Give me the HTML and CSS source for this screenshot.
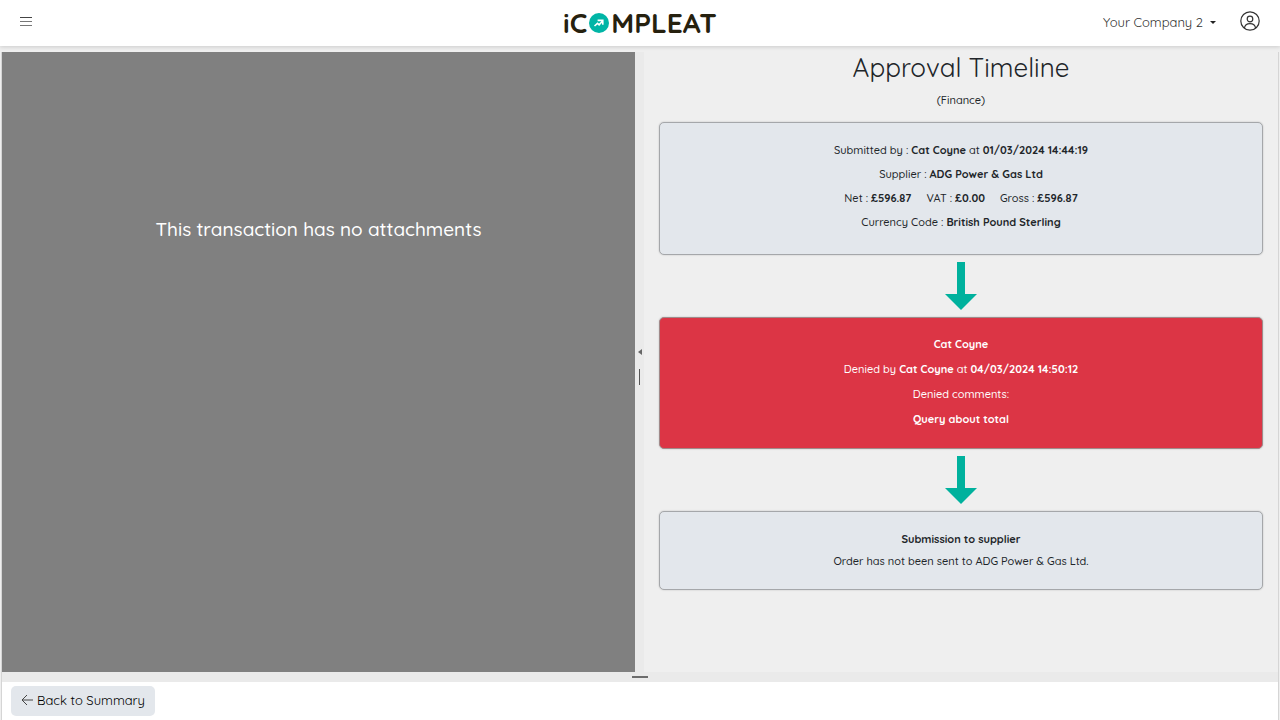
FILE: index.html
```html
<!DOCTYPE html>
<html lang="en">
<head>
    <meta charset="UTF-8">
    <meta name="viewport" content="width=device-width, initial-scale=1.0">
    <title>Approval Timeline</title>
    <link rel="stylesheet" href="styles.css">
</head>
<body>
    <header class="topbar">
        <button class="icon-btn menu-btn" type="button" aria-label="Menu">
            <svg width="12" height="11" viewBox="0 0 12 11" stroke="#777">
                <path d="M0 1.5h12" stroke="#444" />
                <path d="M0 5.5h12M0 9.5h12" />
            </svg>
        </button>
        <a class="logo" href="#" aria-label="iCompleat">
            <span>iC</span>
            <svg width="20" height="20" viewBox="0 0 20 20" fill="none">
                <circle cx="10" cy="10" r="10" fill="#00b5a6" />
                <path d="M5.5 13l3-2.6 1.6 1.4L13.6 8M8.6 7.4h5.2v4.4" stroke="#fff" stroke-width="1.6" />
            </svg>
            <span>MPLEAT</span>
        </a>
        <div class="account">
            <button class="company-btn" type="button">Your Company 2 <span class="caret"></span></button>
            <button class="icon-btn" type="button" aria-label="Profile">
                <svg width="20" height="20" viewBox="0 0 20 20" fill="none" stroke="#333" stroke-width="1.2">
                    <circle cx="10" cy="10" r="9.2" />
                    <circle cx="10" cy="8" r="2.8" />
                    <path d="M4.4 17.2c.4-3 2.6-4.6 5.6-4.6s5.2 1.6 5.6 4.6" />
                </svg>
            </button>
        </div>
    </header>

    <main class="splitter">
        <div class="panes">
            <section class="attachments">
                <p>This transaction has no attachments</p>
            </section>
            <div class="split-bar">
                <span class="collapse"></span>
                <span class="handle"></span>
            </div>
            <section class="timeline">
                <h1>Approval Timeline</h1>
                <p class="dept">(Finance)</p>

                <div class="card submitted">
                    <p>Submitted by : <b>Cat Coyne</b> at <b>01/03/2024 14:44:19</b></p>
                    <p>Supplier : <b>ADG Power &amp; Gas Ltd</b></p>
                    <p class="totals">
                        <span>Net : <b>£596.87</b></span>
                        <span>VAT : <b>£0.00</b></span>
                        <span>Gross : <b>£596.87</b></span>
                    </p>
                    <p>Currency Code : <b>British Pound Sterling</b></p>
                </div>

                <svg class="arrow" width="32" height="48" viewBox="0 0 32 48"><path d="M12 0h8v32h12L16 48 0 32h12z" fill="#00b19d" /></svg>

                <div class="card denied">
                    <p><b>Cat Coyne</b></p>
                    <p>Denied by <b>Cat Coyne</b> at <b>04/03/2024 14:50:12</b></p>
                    <p>Denied comments:</p>
                    <p><b>Query about total</b></p>
                </div>

                <svg class="arrow" width="32" height="48" viewBox="0 0 32 48"><path d="M12 0h8v32h12L16 48 0 32h12z" fill="#00b19d" /></svg>

                <div class="card supplier">
                    <p><b>Submission to supplier</b></p>
                    <p>Order has not been sent to ADG Power &amp; Gas Ltd.</p>
                </div>
            </section>
        </div>
        <div class="bottom-bar"><span></span></div>
        <footer class="actions">
            <button class="back-btn" type="button">
                <svg width="12" height="12" viewBox="0 0 12 12" fill="none" stroke="#444">
                    <path d="M12 6H1M6 1L1 6l5 5" />
                </svg>
                Back to Summary
            </button>
        </footer>
    </main>
</body>
</html>
```
FILE: styles.css
```css
* {
    box-sizing: border-box;
}
body {
    margin: 0;
    height: 100vh;
    display: flex;
    flex-direction: column;
    overflow: hidden;
    background: #efefef;
    color: #212529;
    font-family: Quicksand, Lato, sans-serif;
    font-size: 11px;
    font-weight: 500;
}
p, h1 {
    margin: 0;
}
button {
    font: inherit;
    font-weight: 400;
    color: inherit;
    border: none;
    background: none;
    padding: 0;
    cursor: pointer;
}
svg {
    display: block;
}
b {
    font-weight: 700;
}

/* top bar */
.topbar {
    flex: none;
    display: grid;
    grid-template-columns: 1fr auto 1fr;
    align-items: center;
    height: 46px;
    padding: 0 20px;
    background: #fff;
    box-shadow: 0 1px 4px rgba(0,0,0,0.15);
}
.menu-btn {
    justify-self: start;
    padding-bottom: 3px;
}
.logo {
    display: flex;
    align-items: center;
    gap: 2px;
    color: #26210f;
    font-size: 28px;
    font-weight: bold;
    line-height: 46px;
    text-decoration: none;
}
.account {
    justify-self: end;
    display: flex;
    align-items: center;
    gap: 24px;
    padding-bottom: 4px;
}
.company-btn {
    display: flex;
    align-items: center;
    gap: 7px;
    padding-top: 2px;
    color: #333;
    font-size: 13px;
}
.caret {
    border: 3px solid transparent;
    border-top-color: #222;
    border-bottom: 0;
}

/* splitter */
.splitter {
    flex: 1;
    display: flex;
    flex-direction: column;
    min-height: 0;
    margin: 6px 1px 0;
    border: solid #d5d5d5;
    border-width: 0 1px;
}
.panes {
    flex: 1;
    display: grid;
    grid-template-columns: calc(50% - 5px) 9px 1fr;
    min-height: 0;
}
.attachments {
    padding-top: 164px;
    background: #808080;
    color: #fff;
    font-size: 19px;
    line-height: 26px;
    text-align: center;
}
.split-bar {
    display: flex;
    flex-direction: column;
    align-items: center;
    justify-content: center;
    gap: 14px;
    padding-top: 10px;
    background: #eaeaea;
}
.collapse {
    border: 3px solid transparent;
    border-right: 4px solid #666;
    border-left: 0;
}
.handle {
    width: 1px;
    height: 16px;
    background: #555;
}
.bottom-bar {
    flex: none;
    display: flex;
    align-items: center;
    justify-content: center;
    height: 10px;
    background: #eaeaea;
}
.bottom-bar span {
    width: 16px;
    height: 2px;
    background: #6c6c6c;
}

/* timeline */
.timeline {
    padding: 0 15px;
    overflow: auto;
    text-align: center;
}
h1 {
    font-size: 26px;
    font-weight: normal;
    line-height: 32px;
}
.dept {
    margin: 4px 0 10px;
    line-height: 24px;
}
.card {
    border: 1px solid #a5a7aa;
    border-radius: 5px;
    background: #e3e7ec;
    box-shadow: 0 0 2px rgba(0,0,0,0.2);
    line-height: 24px;
}
.submitted {
    padding: 15px 15px 20px;
}
.totals {
    display: flex;
    justify-content: center;
    gap: 15px;
}
.denied {
    padding: 14px 15px 16px;
    border-color: #a08a8a;
    background: #dc3545;
    color: #fff;
    line-height: 25px;
}
.supplier {
    padding: 16px 15px 17px;
    line-height: 22px;
}
.arrow {
    margin: 7px auto;
}

/* footer */
.actions {
    flex: none;
    height: 38px;
    padding: 4px 9px;
    background: #fff;
}
.back-btn {
    display: flex;
    align-items: center;
    gap: 4px;
    height: 30px;
    padding: 0 10px 2px;
    border-radius: 5px;
    background: #e3e7ec;
    color: #000;
    font-size: 13px;
}
```
